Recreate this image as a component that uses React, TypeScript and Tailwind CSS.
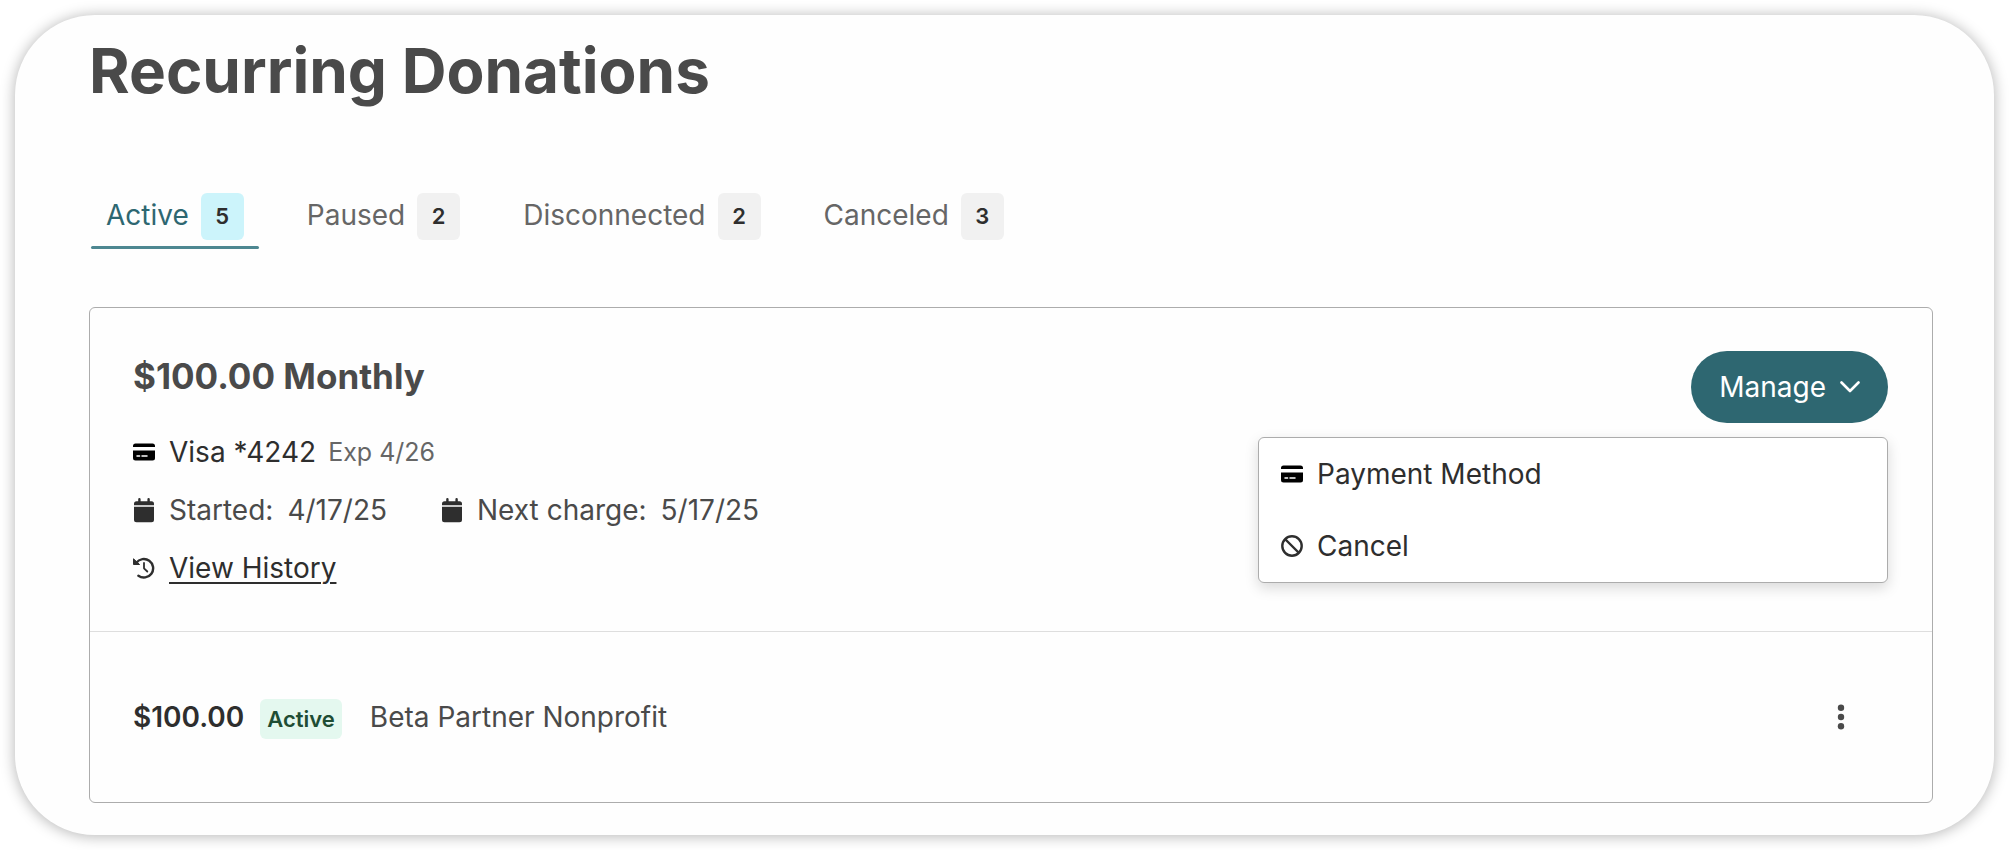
import { useState } from "react";
import type { ReactNode } from "react";
import clsx from "clsx";

const tabs = [
  { label: "Active", count: 5 },
  { label: "Paused", count: 2 },
  { label: "Disconnected", count: 2 },
  { label: "Canceled", count: 3 },
];

function CardIcon() {
  return (
    <svg viewBox="0 0 22 18" className="w-[22px] h-[18px] shrink-0" aria-hidden="true">
      <path d="M2.5 0.500h17A2.5 2.5 0 0 1 22 3V4H0V3A2.5 2.5 0 0 1 2.5 0.500Z" fill="#000" />
      <path d="M0 7.500h22v7.500a2.5 2.5 0 0 1-2.5 2.5h-17A2.5 2.5 0 0 1 0 15Z" fill="#000" />
      <path d="M4 13h2.600M9 13h5" stroke="#fff" strokeWidth="1.500" strokeLinecap="round" />
    </svg>
  );
}

function CalendarIcon() {
  return (
    <svg viewBox="0 0 22 25" className="w-[22px] h-[25px] shrink-0" fill="#2e2e2e" aria-hidden="true">
      <path d="M5.200 1.300a1.200 1.200 0 0 1 2.400 0V3.200h6.800V1.300a1.200 1.200 0 0 1 2.400 0V3.200H18.500A2.500 2.500 0 0 1 21 5.700V7.200H1V5.700A2.500 2.500 0 0 1 3.500 3.200h1.700Z" />
      <path d="M1 8.700h20v13a2.500 2.500 0 0 1-2.500 2.500h-15A2.500 2.500 0 0 1 1 21.700Z" />
    </svg>
  );
}

function HistoryIcon() {
  return (
    <svg viewBox="0 0 22 22" className="size-[22px] shrink-0" fill="none" stroke="#2e2e2e" aria-hidden="true">
      <path d="M3.300 5.800A9.300 9.300 0 1 1 5.400 18.800" strokeWidth="2.400" strokeLinecap="round" />
      <path d="M.5 1.800V7.500H6.600Z" fill="#2e2e2e" strokeWidth="1" strokeLinejoin="round" />
      <path d="M11 6v5.300l3.300 3.200" strokeWidth="1.800" strokeLinecap="round" strokeLinejoin="round" />
    </svg>
  );
}

function BanIcon() {
  return (
    <svg viewBox="0 0 22 22" className="size-[22px] shrink-0" fill="none" stroke="#2e2e2e" strokeWidth="2.400" aria-hidden="true">
      <circle cx="11" cy="11" r="9.700" />
      <path d="M4 4l14 14" />
    </svg>
  );
}

function MenuItem({ icon, children }: { icon: ReactNode; children: ReactNode }) {
  return (
    <button role="menuitem" className="flex h-[72px] w-full items-center gap-[14px] px-[22px] text-left text-[28px] text-[#2e2e2e]">
      {icon}
      {children}
    </button>
  );
}

function ManageMenu() {
  const [open, setOpen] = useState(true);

  return (
    <div className="relative shrink-0">
      <button
        onClick={() => setOpen(!open)}
        aria-expanded={open}
        className="flex h-[72px] items-center gap-[14px] rounded-full bg-[#2e6771] px-7 text-[28px] text-white"
      >
        Manage
        <svg viewBox="0 0 20 12" className="h-3 w-5" fill="none" stroke="currentColor" strokeWidth="2.600" strokeLinecap="round" strokeLinejoin="round" aria-hidden="true">
          <path d="M1.500 1.500 10 10l8.500-8.500" />
        </svg>
      </button>
      {open && (
        <div role="menu" className="absolute right-0 top-full mt-[14px] w-[630px] rounded-md border border-[#acacac] bg-white shadow-[0_5px_14px_rgba(0,0,0,0.15)]">
          <MenuItem icon={<CardIcon />}>Payment Method</MenuItem>
          <MenuItem icon={<BanIcon />}>Cancel</MenuItem>
        </div>
      )}
    </div>
  );
}

export default function App() {
  const [active, setActive] = useState("Active");

  return (
    <div className="bg-white p-[15px] font-[Inter,sans-serif]">
      <main className="rounded-[80px] bg-[#fefefe] pt-4 pr-[61px] pb-8 pl-[74px] shadow-[0_1px_14px_1px_rgba(0,0,0,0.27)]">
        <h1 className="text-[62px] leading-20 font-bold text-[#4a4a4a]">Recurring Donations</h1>

        <div role="tablist" className="mt-[82px] flex gap-[33px] pl-0.5">
          {tabs.map((tab) => {
            const selected = tab.label === active;
            return (
              <button
                key={tab.label}
                role="tab"
                aria-selected={selected}
                onClick={() => setActive(tab.label)}
                className={clsx(
                  "relative flex items-start gap-3 px-[15px] pb-[9px] text-[28px]",
                  selected ? "text-[#2e6771]" : "text-[#666]"
                )}
              >
                <span className="leading-11">{tab.label}</span>
                <span
                  className={clsx(
                    "flex h-[47px] w-[43px] items-center justify-center rounded-md text-[22px] font-semibold text-[#2e2e2e]",
                    selected ? "bg-[#ccf4fb]" : "bg-[#f1f1f1]"
                  )}
                >
                  {tab.count}
                </span>
                {selected && <span className="absolute inset-x-0 bottom-0 h-[3px] rounded-full bg-[#4d8791]" />}
              </button>
            );
          })}
        </div>

        <section className="mt-[58px] rounded-md border border-[#acacac]">
          <div className="flex items-start justify-between border-b border-[#dedede] py-[43px] pr-11 pl-[43px]">
            <div>
              <h2 className="text-[35px] leading-[50px] font-bold text-[#4a4a4a]">$100.00 Monthly</h2>
              <div className="mt-[31px] flex flex-col gap-[18px] text-[28px] leading-10 text-[#4a4a4a]">
                <div className="flex items-center gap-[14px]">
                  <CardIcon />
                  <div className="flex items-center gap-3">
                    <span className="text-[#2e2e2e]">Visa *4242</span>
                    <span className="text-[25px] text-[#666]">Exp 4/26</span>
                  </div>
                </div>
                <div className="flex items-center gap-[54px]">
                  <div className="flex items-center gap-[14px]">
                    <CalendarIcon />
                    <span>Started:</span>
                    <span>4/17/25</span>
                  </div>
                  <div className="flex items-center gap-[14px]">
                    <CalendarIcon />
                    <span>Next charge:</span>
                    <span>5/17/25</span>
                  </div>
                </div>
                <div className="flex items-center gap-[14px] text-[#2e2e2e]">
                  <HistoryIcon />
                  <a href="#history" className="underline decoration-2 underline-offset-4">
                    View History
                  </a>
                </div>
              </div>
            </div>
            <ManageMenu />
          </div>

          <div className="flex items-center px-[43px] py-[63px] text-[28px] leading-10">
            <span className="font-semibold text-[#2e2e2e]">$100.00</span>
            <span className="mt-1 ml-4 rounded-md bg-[#e4f8ef] px-[7px] text-[22px] leading-10 font-semibold text-[#1e4d34]">Active</span>
            <span className="ml-7 text-[#4a4a4a]">Beta Partner Nonprofit</span>
            <button aria-label="More options" className="mr-9 ml-auto flex h-10 w-6 items-center justify-center">
              <svg viewBox="0 0 8 28" className="h-7 w-2" fill="#4a4a4a" aria-hidden="true">
                <circle cx="4" cy="4.700" r="3.200" />
                <circle cx="4" cy="14" r="3.200" />
                <circle cx="4" cy="23.300" r="3.200" />
              </svg>
            </button>
          </div>
        </section>
      </main>
    </div>
  );
}
